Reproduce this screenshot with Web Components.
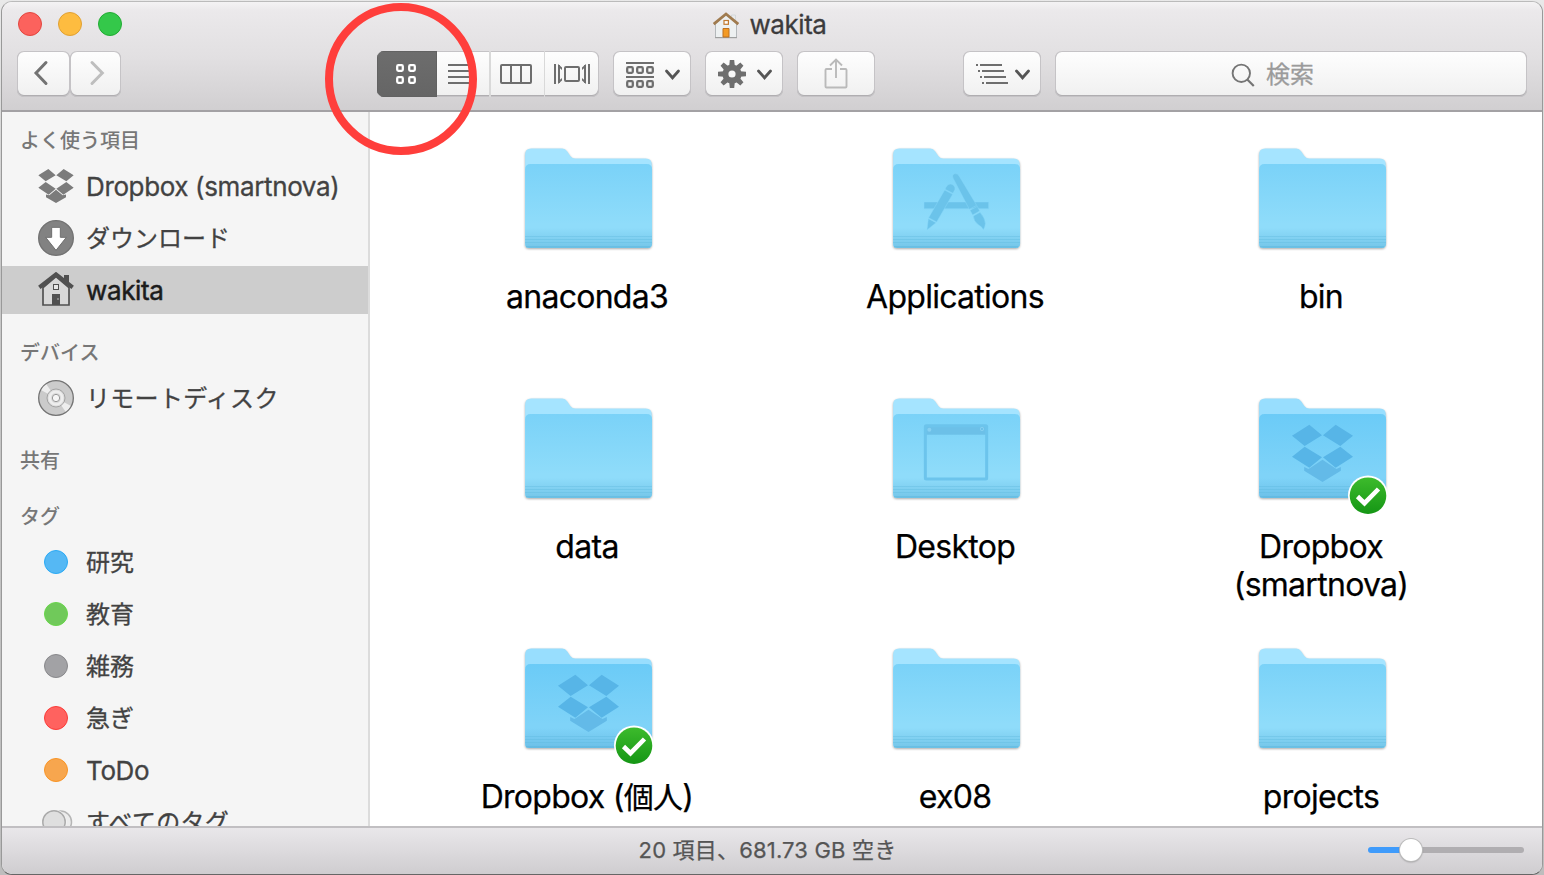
<!DOCTYPE html>
<html lang="ja">
<head>
<meta charset="utf-8">
<title>wakita</title>
<style>
html,body{margin:0;height:100%;overflow:hidden}
body{font-family:Inter,"Noto Sans CJK JP",sans-serif;background:linear-gradient(#e9e9e9,#c9c9c9 30%,#bdbdbd)}
</style>
</head>
<body>
<finder-window></finder-window>
<script>
const define = (name, html, setup) => {
  const t = document.createElement('template');
  t.innerHTML = html;
  customElements.define(name, class extends HTMLElement {
    connectedCallback() {
      if (this.shadowRoot) return;
      const r = this.attachShadow({ mode: 'open' });
      r.appendChild(t.content.cloneNode(true));
      if (setup) setup(this, r);
    }
  });
};

/* Toolbar, sidebar and title glyphs */
const chev = (x, y = 71) => `<path d="M${x - 6} ${y}l6 6.8 6-6.8" fill="none" stroke="#555" stroke-width="2.8" stroke-linecap="round"/>`;
const sq = (x, y, s, c) => `<rect x="${x + 1.2}" y="${y + 1.2}" width="${s - 2.4}" height="${s - 2.4}" rx="1.2" fill="none" stroke="${c}" stroke-width="2.3"/>`;
let teeth = '';
for (let i = 0; i < 8; i++) teeth += `<path d="M729.2 66L729.8 60h4.4l.6 6z" transform="rotate(${i * 45} 732 74)"/>`;
const half = '<path d="M145 147L167 166 137 184 115 166zM137 186L167 206 146 224 115 203z"/>';
const ICONS = {
  back: ['17 51 53 46', '<path d="M46 62.5L36 73l10 10.5" fill="none" stroke="#737373" stroke-width="3" stroke-linecap="round"/>'],
  forward: ['70 51 51 46', '<path d="M92 62.5L102.300 73 92 83.500" fill="none" stroke="#bebebe" stroke-width="3" stroke-linecap="round"/>'],
  grid: ['377 51 60 46', sq(396, 64, 8, '#fff') + sq(408, 64, 8, '#fff') + sq(396, 76, 8, '#fff') + sq(408, 76, 8, '#fff')],
  list: ['437 51 52 46', '<path d="M448 65h21M448 71h21M448 77h21M448 83h21" stroke="#6e6e6e" stroke-width="2"/>'],
  columns: ['491 51 53 46', '<g fill="none" stroke="#6e6e6e" stroke-width="2"><rect x="501" y="65" width="30" height="18" rx="1"/><path d="M511 65v18M521 65v18"/></g>'],
  flow: ['545 51 54 46', '<g fill="none" stroke="#6e6e6e" stroke-width="2"><rect x="565" y="67" width="14" height="14" rx="1"/><path d="M555 64v20M589 64v20M559 65v18M585 65v18"/></g><path d="M558 64l4 3.500v2.500l-4-3.500zM558 84l4-3.500v-2.500l-4 3.500zM586 64l-4 3.500v2.500l4-3.500zM586 84l-4-3.500v-2.500l4 3.500z" fill="#6e6e6e"/>'],
  group: ['613 51 78 46', '<path d="M626 63h28M626 77h28" stroke="#6e6e6e" stroke-width="2"/>' + [66, 80].map(y => [626, 636, 646].map(x => sq(x, y, 8, '#6e6e6e')).join('')).join('') + chev(672.5)],
  gear: ['705 51 78 46', `<g fill="#6e6e6e">${teeth}</g><circle cx="732" cy="74" r="6.600" fill="none" stroke="#6e6e6e" stroke-width="6"/>` + chev(764.5)],
  share: ['797 51 78 46', '<path d="M832 69h-5.500q-1 0-1 1v16.500q0 1 1 1h19q1 0 1-1v-16.500q0-1-1-1h-5.500M836 78v-18M830 65.500l6-6 6 6" fill="none" stroke="#bababa" stroke-width="1.900"/>'],
  arrange: ['963 51 78 46', '<path d="M976 65h2M980 65h22M978 71h2M982 71h22M980 77h2M984 77h22M982 83h2M986 83h22" stroke="#6e6e6e" stroke-width="2"/>' + chev(1022.5)],
  search: ['1230 61 26 28', '<circle cx="1241.300" cy="73.300" r="8.700" fill="none" stroke="#757575" stroke-width="1.900"/><path d="M1247.300 79.500l6.500 6.500" stroke="#757575" stroke-width="2.200"/>'],
  homecolor: ['712 11 28 28', '<path d="M731.500 15h4v9h-4z" fill="#e8eaec" stroke="#cfd3d6" stroke-width=".8"/><path d="M715.500 23.500L726 14.500l10.500 9V37.500h-21z" fill="#edf0f1" stroke="#b4b8bb" stroke-width="1"/><path d="M715 37.700h22" stroke="#999" stroke-width="1"/><path d="M713.700 24.200L726 14l12.300 10.200" fill="none" stroke="#a07b4f" stroke-width="2.800"/><rect x="724" y="20.500" width="4.400" height="3.800" fill="#fff" stroke="#c27a30" stroke-width="1.200"/><path d="M723 28.500h6V37h-6z" fill="#f39a25" stroke="#bd7021" stroke-width="1"/>'],
  dropbox: ['114 144 108 108', `<g fill="#7b7b7b">${half}<g transform="matrix(-1 0 0 1 336 0)">${half}</g><path d="M168 209l20 17 10-2.500v8L168 249l-30-17.500v-8l10 2.500z"/></g>`],
  download: ['114 300 108 108', '<circle cx="168" cy="354" r="52" fill="#828282" stroke="#727272" stroke-width="4"/><path d="M155 322h26v30h18l-31 39-31-39h18z" fill="#fff" stroke="#6f6f6f" stroke-width="3"/>'],
  home: ['114 456 108 108', '<path d="M129 503L168 470l39 33V555h-78z" fill="#d8d8d8" stroke="#505050" stroke-width="5"/><path d="M192 465h15v32l-15-12z" fill="#505050"/><path d="M118 502l50-39 50 39" fill="none" stroke="#505050" stroke-width="12"/><rect x="160.500" y="493.500" width="15" height="15" fill="#e8e8e8" stroke="#505050" stroke-width="3"/><path d="M156 522h24v33h-24z" fill="#505050"/><path d="M174 534v6" stroke="#ccc" stroke-width="2.500"/>'],
  disc: ['114 150 108 108', '<circle cx="168" cy="204" r="52" fill="#cbcbcb" stroke="#747474" stroke-width="4"/><path d="M168 204L124 181q6-13 15-18zM168 204L212 227q-6 13-15 18z" fill="#eee"/><g fill="#ddd" stroke="#999" stroke-width="2.500"><circle cx="168" cy="204" r="27"/><circle cx="168" cy="204" r="11" fill="#f6f6f6" stroke-width="3"/></g><circle cx="168" cy="204" r="19" fill="none" stroke="#eee" stroke-width="7"/>'],
  tags: ['38 804 36 36', '<circle cx="60.500" cy="822" r="11" fill="#ececec" stroke="#b5b5b5" stroke-width="1.500"/><circle cx="54" cy="822" r="12.500" fill="#f6f6f6"/><circle cx="54" cy="822" r="11.200" fill="#dfdfdf" stroke="#aaa" stroke-width="1.500"/>']
};
define('ui-icon', `<style>:host{display:block;flex:none}svg{display:block}</style><svg></svg>`, (el, r) => {
  const [vb, body] = ICONS[el.getAttribute('name')];
  const s = r.querySelector('svg'), p = vb.split(' ');
  s.setAttribute('viewBox', vb);
  s.setAttribute('width', el.getAttribute('size') || p[2]);
  s.setAttribute('height', el.getAttribute('size') || p[3]);
  s.innerHTML = body;
});

define('tool-button', `<style>
:host{display:flex;flex:none;height:46px;box-sizing:border-box;border-radius:7px;overflow:hidden;background:linear-gradient(#fefefe,#f0f0f0);box-shadow:inset 0 0 0 1px #c5c3c6,inset 0 -1px 0 1px #b0aeb1}
</style><slot></slot>`);

define('view-switch', `<style>
:host{display:flex;flex:none;width:222px;height:46px;border-radius:7px;overflow:hidden;background:linear-gradient(#fefefe,#f0f0f0);box-shadow:inset 0 0 0 1px #c5c3c6,inset 0 -1px 0 1px #b0aeb1}
.on{background:linear-gradient(#6d6d6d,#656565);box-shadow:inset 0 0 0 1px #626262}
ui-icon+ui-icon+ui-icon{border-left:2px solid #d9d9d9}
ui-icon:last-child{border-left-width:1px}
</style><ui-icon class="on" name="grid"></ui-icon><ui-icon name="list"></ui-icon><ui-icon name="columns"></ui-icon><ui-icon name="flow"></ui-icon>`);

define('search-field', `<style>
:host{display:flex;align-items:center;box-sizing:border-box;width:472px;height:46px;border-radius:7px;padding:2px 0 0 175px;gap:10px;background:linear-gradient(#fefefe,#f0f0f0);box-shadow:inset 0 0 0 1px #c5c3c6,inset 0 -1px 0 1px #b0aeb1;font-size:24px;line-height:44px;color:#9b9b9b;-webkit-text-stroke:.3px #9b9b9b}
</style><ui-icon name="search"></ui-icon><span><slot></slot></span>`);

define('window-header', `<style>
:host{display:block;box-sizing:border-box;height:110px;border-bottom:2px solid #9d9b9e;border-bottom-color:#a3a1a4;background:linear-gradient(#f4f3f4,#ebe9eb 8%,#e2e0e2 50%,#d1cfd1)}
.top{display:grid;grid-template-columns:1fr auto 1fr;height:49px;align-items:center}
.lights{display:flex;gap:16px;padding-left:16px;margin-top:-5px}
.lights i{width:24px;height:24px;border-radius:50%;box-sizing:border-box;border:1px solid #e2463f;background:#fc625d}
.lights i:nth-child(2){background:#fdbc40;border-color:#e0a033}
.lights i:nth-child(3){background:#34c84a;border-color:#22ab33}
.title{display:flex;gap:10px;align-items:center;font-size:26px;line-height:32px;color:#3c3b3c;letter-spacing:-.45px;margin:-3px 6px 0 0;-webkit-text-stroke:.3px #3c3b3c}
.bar{display:flex;padding-left:15px}
</style>
<div class="top"><div class="lights"><i></i><i></i><i></i></div><div class="title"><ui-icon name="homecolor"></ui-icon><slot></slot></div></div>
<div class="bar">
<tool-button style="margin-right:0"><ui-icon name="back"></ui-icon></tool-button>
<tool-button style="margin-right:256px"><ui-icon name="forward"></ui-icon></tool-button>
<view-switch style="margin-right:14px"></view-switch>
<tool-button style="margin-right:14px"><ui-icon name="group"></ui-icon></tool-button>
<tool-button style="margin-right:14px"><ui-icon name="gear"></ui-icon></tool-button>
<tool-button style="margin-right:88px"><ui-icon name="share"></ui-icon></tool-button>
<tool-button style="margin-right:14px"><ui-icon name="arrange"></ui-icon></tool-button>
<search-field>検索</search-field>
</div>`);

define('side-heading', `<style>:host{display:block;height:32px;line-height:32px;padding:21px 0 3px 18px;font-size:20px;font-weight:500;color:#777}:host([first]){padding-top:13px}</style><slot></slot>`);

define('side-item', `<style>
:host{display:flex;height:48px;padding:2px 0 2px 36px;align-items:center;gap:12px;font-size:24px;color:#424242;white-space:nowrap;-webkit-text-stroke:.3px #424242}
:host([latin]){font-size:26px;letter-spacing:-.37px}
:host([wide]){letter-spacing:.3px}
:host([selected]){padding:0 0 0 36px;margin:2px 0;background:#cdcdcd;color:#1c1c1c;-webkit-text-stroke:.5px #1c1c1c}
.dot{box-sizing:border-box;width:24px;height:24px;margin:0 6px;border-radius:50%;border:1.5px solid;flex:none}
span{line-height:46px;padding-top:2px}
:host([latin]) span{padding-top:1px}
</style><span><slot></slot></span>`, (el, r) => {
  const icon = el.getAttribute('icon');
  let g;
  if (icon) { g = document.createElement('ui-icon'); g.setAttribute('name', icon); g.setAttribute('size', 36); }
  else { const [f, b] = el.getAttribute('tag').split(' '); g = document.createElement('div'); g.className = 'dot'; g.style.background = f; g.style.borderColor = b; }
  r.insertBefore(g, r.querySelector('span'));
});

define('side-bar', `<style>
:host{display:block;width:366px;flex:none;overflow:hidden;background:#f5f5f5;border-right:2px solid #dcdcdc}
</style>
<side-heading first>よく使う項目</side-heading>
<side-item icon="dropbox" latin>Dropbox (smartnova)</side-item>
<side-item icon="download">ダウンロード</side-item>
<side-item icon="home" latin selected>wakita</side-item>
<side-heading>デバイス</side-heading>
<side-item icon="disc" wide>リモートディスク</side-item>
<side-heading>共有</side-heading>
<side-heading>タグ</side-heading>
<side-item tag="#55b8f4 #2aaaf5">研究</side-item>
<side-item tag="#70c95a #68d64a">教育</side-item>
<side-item tag="#a2a2a5 #88888b">雑務</side-item>
<side-item tag="#ff625f #fb3b38">急ぎ</side-item>
<side-item tag="#f7a64e #f99424" latin>ToDo</side-item>
<side-item icon="tags" wide>すべてのタグ</side-item>`);

const dbHalf = '<path d="M216 167L268 134 306 166 254 198zM254 200L306 232 268 263 216 230z"/>';
const MARKS = {
  apps: `<g transform="translate(-32 -4) scale(.33333)" fill="#6bc3ea" stroke="#86d6f8" stroke-width="1.500"><path d="M192 216h194v20H192z"/><path d="M280 146q-6-12 4-15 8-2 13 6L350 226 328 238zM330 241l22-12 7 14-21 12zM340 258l20-11q16 18 16 34-1 12-6 18-5-10-14-14-16-12-16-27z"/><path d="M258 172q5-11 15-10 13 4 12 16l-6 12-24-12zM254 180l24 13L230 276 206 263zM205 266l23 12-27 22z"/></g>`,
  desktop: `<g transform="translate(-32 -4) scale(.33333)" fill="none" stroke="#6cc4ec"><path d="M196 137h184v27H196z" fill="#6cc0e8" stroke="none"/><rect x="196" y="137" width="184" height="160" rx="3" stroke-width="9"/><circle cx="208" cy="149" r="6" fill="#86d0f2" stroke="none"/><circle cx="366" cy="147" r="5" stroke="#86d0f2" stroke-width="3"/></g>`,
  dropbox: `<g transform="translate(-38 -4) scale(.33333)" fill="#57b5e7">${dbHalf}<g transform="matrix(-1 0 0 1 615 0)">${dbHalf}</g><path d="M307.500 239l42 28 13-6v11l-55 34-55-34v-11l13 6z" fill="#63bae8"/></g>`
};
define('finder-folder', `<style>
:host{display:block;text-align:center;font-size:32px;line-height:38px;color:#000;letter-spacing:-.72px;-webkit-text-stroke:.25px #000}
.art{position:relative;width:128px;height:128px;margin:0 auto 16px}
svg{display:block;overflow:visible}
.badge{position:absolute;left:90px;top:91px;display:none}
:host([synced]) .badge{display:block}
.name{margin:0 1px 0 -1px}
</style>
<div class="art"><svg width="128" height="128" viewBox="0 0 128 128">
<defs><linearGradient id="f" x2="0" y2="1"><stop class="a"/><stop class="b" offset=".72"/><stop class="b" offset=".76"/><stop class="c" offset="1"/></linearGradient></defs>
<g transform="translate(.3 .4)"><path d="M.800 109V20q0-6 6-6H38q3 0 5 3l3 4.500q2 2.500 5 2.500h70.500q6 0 6 6v79q0 4.500-4.500 4.500h-118q-4.500 0-4.500-4.500z" class="back" style="filter:drop-shadow(0 1.500px 1px #0005)"/>
<path d="M.800 109V35q0-5.500 5.500-5.500h116q5.500 0 5.500 5.500v74q0 4.500-4.500 4.500h-118q-4.500 0-4.500-4.500z" fill="url(#f)"/></g>
<path d="M1 102.500h127M1 105.500h127M1 108.500h127" stroke="#5cb6de" stroke-opacity=".35" stroke-width="1"/>
<path d="M2 112.800h124" stroke="#4da9d2" stroke-opacity=".4" stroke-width="1.200"/>
<g class="mark"></g></svg>
<svg class="badge" width="40" height="40" viewBox="0 0 40 40"><defs><linearGradient id="g" x2="0" y2="1"><stop stop-color="#3dbb2c"/><stop offset="1" stop-color="#159615"/></linearGradient></defs><circle cx="20" cy="20.500" r="20" fill="#fff"/><circle cx="20" cy="20.700" r="18.300" fill="url(#g)"/><path d="M9.500 21.500l7 6.700L30.500 14" fill="none" stroke="#fff" stroke-width="4.600"/></svg>
</div><div class="name"><slot></slot></div>`, (el, r) => {
  const deep = el.hasAttribute('synced');
  const c = deep ? ['#6bcbf7', '#7fd3f8', '#6cc0e8', '#98defe'] : ['#7ad2f8', '#8fdcfa', '#74c6e9', '#a5e4ff'];
  ['.a', '.b', '.c'].forEach((s, i) => r.querySelectorAll(s).forEach(n => n.setAttribute('stop-color', c[i])));
  r.querySelector('.back').setAttribute('fill', c[3]);
  const m = el.getAttribute('mark');
  if (m) r.querySelector('.mark').innerHTML = MARKS[m];
});

define('folder-grid', `<style>
:host{display:grid;flex:1;box-sizing:border-box;grid-template-columns:368px 368px 364px;grid-auto-rows:250px;align-content:start;padding:22px 0 0 34px;background:#fff;overflow:hidden}
.cjk{font-size:30px}
</style>
<finder-folder>anaconda3</finder-folder>
<finder-folder mark="apps">Applications</finder-folder>
<finder-folder>bin</finder-folder>
<finder-folder>data</finder-folder>
<finder-folder mark="desktop">Desktop</finder-folder>
<finder-folder mark="dropbox" synced>Dropbox<br>(smartnova)</finder-folder>
<finder-folder mark="dropbox" synced>Dropbox (<span class="cjk">個人</span>)</finder-folder>
<finder-folder>ex08</finder-folder>
<finder-folder>projects</finder-folder>`);

define('zoom-slider', `<style>
:host{display:flex;align-items:center;width:156px;height:24px}
.l{width:43px;height:6px;border-radius:3px 0 0 3px;background:#3f9bfb}
.r{flex:1;height:6px;border-radius:0 3px 3px 0;background:#b0aeb1}
.k{width:22px;height:22px;margin:0 -11px;border-radius:50%;background:#fff;box-shadow:0 0 0 1px #bbb,0 1px 2px #0006;z-index:1}
</style><div class="l"></div><div class="k"></div><div class="r"></div>`);

define('status-bar', `<style>
:host{display:grid;grid-template-columns:1fr auto 1fr;align-items:center;box-sizing:border-box;height:48px;padding-bottom:2px;border-top:2px solid #c1bfc2;background:linear-gradient(#e9e7ea,#cfcdd0);color:#555;font-size:22px;line-height:44px}
span{margin-right:9px;letter-spacing:.18px;white-space:nowrap;-webkit-text-stroke:.25px #555}
zoom-slider{justify-self:end;margin-right:18px}
</style><i></i><span><slot></slot></span><zoom-slider></zoom-slider>`);

define('finder-window', `<style>
:host{display:block;box-sizing:border-box;height:875px;padding:1px 1px 0 1px}
.win{display:flex;flex-direction:column;box-sizing:border-box;height:874px;border:1px solid #999;border-top-color:#bbb;border-bottom-color:#666;border-radius:11px;overflow:hidden;background:#fff}
.body{display:flex;flex:1;min-height:0}
.ring{position:absolute;left:325px;top:3px;width:152px;height:152px;box-sizing:border-box;border:8px solid #ff3e3b;border-radius:50%}
</style>
<div class="win"><window-header>wakita</window-header><div class="body"><side-bar></side-bar><folder-grid></folder-grid></div><status-bar>20 項目、681.73 GB 空き</status-bar></div><div class="ring"></div>`);
</script>
</body>
</html>
